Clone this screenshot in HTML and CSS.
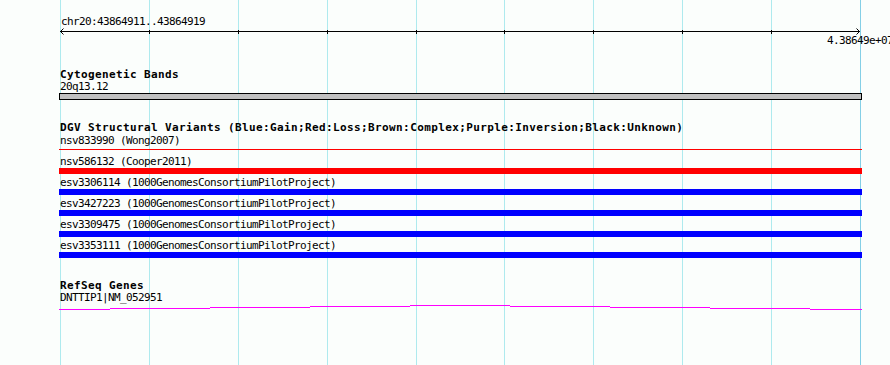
FILE: index.html
```html
<!DOCTYPE html>
<html lang="en">
<head>
    <meta charset="UTF-8">
    <title>chr20:43864911..43864919</title>
    <link rel="stylesheet" href="styles.css">
</head>
<body>
    <div class="panel">
        <section class="ruler">
            <div class="ruler-title">chr20:43864911..43864919</div>
            <svg class="ruler-axis" width="801" height="8" viewBox="0 0 801 8">
                <path d="M0 4.5 H800" stroke="#000" fill="none"/>
                <path d="M89.5 3 V7 M178.5 3 V7 M267.5 3 V7 M356.5 3 V7 M444.5 3 V7 M533.5 3 V7 M622.5 3 V7 M711.5 3 V7" stroke="#000" fill="none"/>
                <path d="M3.5 1.5 L0.5 4.5 L3.5 7.5 M796.5 1.5 L799.5 4.5 L796.5 7.5" stroke="#000" fill="none"/>
            </svg>
            <div class="ruler-end">4.38649e+07</div>
        </section>

        <section class="track track-cyto">
            <h2 class="track-title">Cytogenetic Bands</h2>
            <div class="feature-label">20q13.12</div>
            <div class="band"></div>
        </section>

        <section class="track track-dgv">
            <h2 class="track-title">DGV Structural Variants (Blue:Gain;Red:Loss;Brown:Complex;Purple:Inversion;Black:Unknown)</h2>
            <div class="variant">
                <div class="feature-label">nsv833990 (Wong2007)</div>
                <div class="bar bar-thin loss"></div>
            </div>
            <div class="variant">
                <div class="feature-label">nsv586132 (Cooper2011)</div>
                <div class="bar loss"></div>
            </div>
            <div class="variant">
                <div class="feature-label">esv3306114 (1000GenomesConsortiumPilotProject)</div>
                <div class="bar gain"></div>
            </div>
            <div class="variant">
                <div class="feature-label">esv3427223 (1000GenomesConsortiumPilotProject)</div>
                <div class="bar gain"></div>
            </div>
            <div class="variant">
                <div class="feature-label">esv3309475 (1000GenomesConsortiumPilotProject)</div>
                <div class="bar gain"></div>
            </div>
            <div class="variant">
                <div class="feature-label">esv3353111 (1000GenomesConsortiumPilotProject)</div>
                <div class="bar gain"></div>
            </div>
        </section>

        <section class="track track-genes">
            <h2 class="track-title">RefSeq Genes</h2>
            <div class="feature-label">DNTTIP1|NM_052951</div>
            <svg class="intron" width="803" height="8" viewBox="0 0 803 8">
                <path d="M0 6.5 H51 M51 5.5 H151 M151 4.5 H251 M251 3.5 H351 M351 2.5 H451 M451 3.5 H551 M551 4.5 H651 M651 5.5 H751 M751 6.5 H803" stroke="#ff00ff" fill="none"/>
            </svg>
        </section>
    </div>
</body>
</html>
```

FILE: styles.css
```css
* {
    margin: 0;
    padding: 0;
    box-sizing: border-box;
}

html, body {
    width: 890px;
    height: 365px;
    overflow: hidden;
}

body {
    background: #fbfefc;
    color: #000;
    font-family: 'DejaVu Sans Mono', 'Liberation Mono', monospace;
    font-size: 11px;
    letter-spacing: -0.62px;
}

/* track area with the vertical grid lines */
.panel {
    margin-left: 60px;
    width: 801px;
    height: 365px;
    border-right: 1px solid #84cfe6;
    background-image:
        linear-gradient(#aeeaee, #aeeaee),
        linear-gradient(#aeeaee, #aeeaee),
        linear-gradient(#aeeaee, #aeeaee),
        linear-gradient(#aeeaee, #aeeaee),
        linear-gradient(#aeeaee, #aeeaee),
        linear-gradient(#aeeaee, #aeeaee),
        linear-gradient(#aeeaee, #aeeaee),
        linear-gradient(#aeeaee, #aeeaee),
        linear-gradient(#aeeaee, #aeeaee);
    background-size: 1px 100%;
    background-repeat: no-repeat;
    background-position: 0 0, 89px 0, 178px 0, 267px 0, 356px 0, 444px 0, 533px 0, 622px 0, 711px 0;
}

.ruler {
    padding-top: 16px;
}

.ruler-title {
    line-height: 11px;
    padding-left: 1px;
}

.ruler-axis {
    display: block;
}

.ruler-end {
    line-height: 11px;
    text-align: right;
    margin-right: -33px;
    white-space: nowrap;
}

.track-title {
    font-size: 11px;
    font-weight: bold;
    letter-spacing: 0.38px;
    white-space: nowrap;
}

.feature-label {
    line-height: 12px;
    white-space: nowrap;
}

.track-cyto {
    margin-top: 22px;
}

.track-cyto .track-title {
    line-height: 13px;
}

.band {
    margin-left: -1px;
    width: 803px;
    height: 7px;
    background: #c0c0c0;
    border: 1px solid #000;
}

.track-dgv {
    margin-top: 22px;
}

.track-dgv .track-title {
    line-height: 12px;
}

.variant {
    height: 21px;
}

.variant .feature-label {
    line-height: 13px;
}

.bar {
    margin-left: -1px;
    width: 803px;
    height: 6px;
}

.bar-thin {
    height: 1px;
    margin-top: 2px;
}

.loss {
    background: #ff0000;
}

.gain {
    background: #0000ff;
}

.track-genes {
    margin-top: 20px;
}

.track-genes .track-title {
    line-height: 12px;
}

.track-genes .feature-label {
    line-height: 11px;
}

.intron {
    display: block;
    margin-left: -1px;
}
```
